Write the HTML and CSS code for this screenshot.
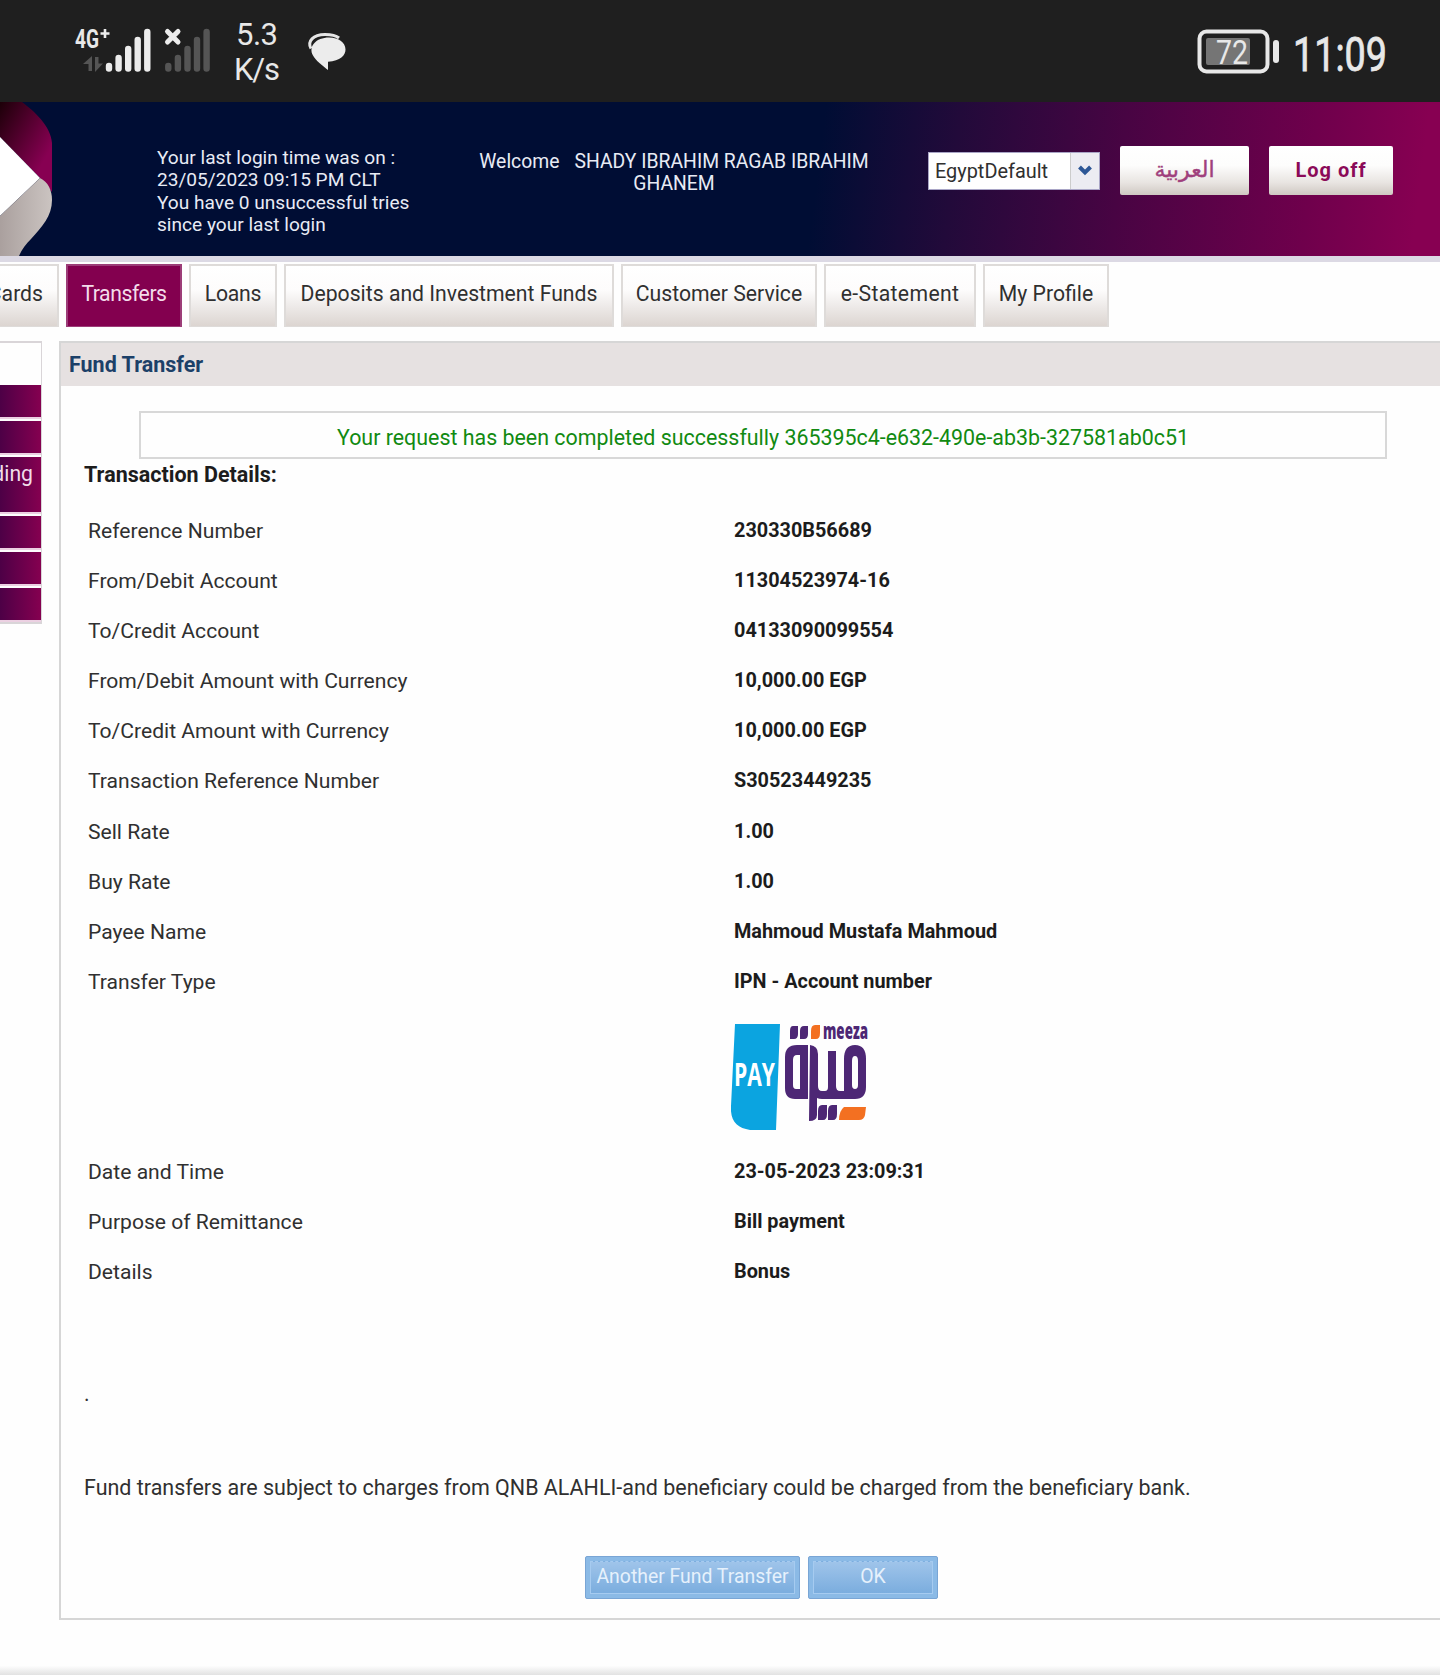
FILE: index.html
```html
<!DOCTYPE html>
<html lang="en">
<head>
<meta charset="utf-8">
<title>Fund Transfer</title>
<link rel="stylesheet" href="styles.css">
</head>
<body>
<div class="status">
  <svg class="status-icons" width="360" height="102" viewBox="0 0 360 102">
    <text x="75" y="48" class="net" textLength="24" lengthAdjust="spacingAndGlyphs">4G</text>
    <path d="M105 29v9M100.500 33.500h9" stroke="#ececec" stroke-width="2.600"/>
    <path d="M92 56v15h-3.500v-7H83zM95 57h3.500v6.500h4.500L95 72z" fill="#555"/>
    <g stroke="#ececec" stroke-width="6.400" stroke-linecap="round">
      <path d="M109 66v2.500M118.600 58v10.500M128.200 49v19.500M137.700 40v28.500M147.300 32v36.500"/>
    </g>
    <g stroke="#555" stroke-width="6.400" stroke-linecap="round">
      <path d="M168.300 66v2.500M177.900 58v10.500M187.500 49v19.500M197 40v28.500M206.600 32v36.500"/>
    </g>
    <path d="M167 31l12 11.500M179 31l-12 11.500" stroke="#1f1f1f" stroke-width="9"/>
    <path d="M167.500 31.500l10.500 10.500M178 31.500l-10.500 10.500" stroke="#ececec" stroke-width="5" stroke-linecap="round"/>
    <text x="236" y="45" class="speed" textLength="42">5.3</text>
    <text x="234" y="80" class="speed" textLength="46">K/s</text>
    <path d="M311 48.500c-4-7 2-14 14-14 7 0 11 1 14 3.500" stroke="#e6e6e6" stroke-width="3" fill="none"/>
    <path d="M329 37.500c10 0 16.500 5 16.500 12 0 6-5 11-17.500 12.300v8.200c-5-4-12-9-15-14.500-5-9 3-18 16-18z" fill="#ececec"/>
  </svg>
  <svg class="status-icons" width="260" height="102" viewBox="0 0 260 102">
    <rect x="19.500" y="31.500" width="68" height="40" rx="7" fill="none" stroke="#e8e8e8" stroke-width="4"/>
    <rect x="26" y="38" width="44" height="27" rx="2" fill="#757575"/>
    <text x="36" y="63.500" class="level" textLength="32" lengthAdjust="spacingAndGlyphs">72</text>
    <path d="M96 43v17" stroke="#e8e8e8" stroke-width="6" stroke-linecap="round"/>
    <text x="113" y="70.500" class="clock" textLength="94" lengthAdjust="spacingAndGlyphs">11:09</text>
  </svg>
</div>

<header class="header">
  <svg class="brand" width="157" height="154" viewBox="0 0 157 154">
    <defs>
      <linearGradient id="ruby" x1="0" y1="0" x2="1" y2="1">
        <stop offset="0" stop-color="#1c0008"/><stop offset=".75" stop-color="#870052"/>
      </linearGradient>
      <linearGradient id="stone" x1="0" y1="0" x2="1" y2="0">
        <stop offset="0" stop-color="#aaa09e"/><stop offset="1" stop-color="#cbc4c1"/>
      </linearGradient>
    </defs>
    <path d="M0 0h22c12 9 29 24 30 41v49L40 76 0 35z" fill="url(#ruby)"/>
    <path d="M0 35l40 41L0 114z" fill="#fff"/>
    <path d="M0 114l40-38c8 4 12 12 12 22 0 16-10 27-21 39-5 5-9 10-12 17H0z" fill="url(#stone)"/>
  </svg>
  <div class="last-login">Your last login time was on :<br>23/05/2023 09:15 PM CLT<br>You have 0 unsuccessful tries<br>since your last login</div>
  <div class="customer"><span class="welcome">Welcome</span>SHADY IBRAHIM RAGAB IBRAHIM<br>GHANEM</div>
  <div class="select"><span class="select-value">EgyptDefault</span><span class="select-arrow"><svg width="16" height="12" viewBox="0 0 16 12"><path d="M2.500 2l5.500 5.500L13.500 2" fill="none" stroke="#2d5796" stroke-width="4"/></svg></span></div>
  <div class="head-btn arabic" lang="ar">العربية</div>
  <div class="head-btn logoff">Log off</div>
</header>

<nav class="tabs">
  <div class="tab cards"><span>Cards</span></div>
  <div class="tab active transfers">Transfers</div>
  <div class="tab loans">Loans</div>
  <div class="tab deposits">Deposits and Investment Funds</div>
  <div class="tab service">Customer Service</div>
  <div class="tab statement">e-Statement</div>
  <div class="tab profile">My Profile</div>
</nav>

<div class="columns">
  <aside class="side">
    <div class="side-item"></div>
    <div class="side-item"></div>
    <div class="side-item tall"><span>ding</span></div>
    <div class="side-item"></div>
    <div class="side-item"></div>
    <div class="side-item"></div>
  </aside>
  <main class="panel">
    <h1 class="panel-title">Fund Transfer</h1>
    <div class="notice">Your request has been completed successfully 365395c4-e632-490e-ab3b-327581ab0c51</div>
    <h2 class="subtitle">Transaction Details:</h2>
    <dl class="details">
      <dt>Reference Number</dt><dd>230330B56689</dd>
      <dt>From/Debit Account</dt><dd>11304523974-16</dd>
      <dt>To/Credit Account</dt><dd>04133090099554</dd>
      <dt>From/Debit Amount with Currency</dt><dd>10,000.00 EGP</dd>
      <dt>To/Credit Amount with Currency</dt><dd>10,000.00 EGP</dd>
      <dt>Transaction Reference Number</dt><dd>S30523449235</dd>
      <dt>Sell Rate</dt><dd>1.00</dd>
      <dt>Buy Rate</dt><dd>1.00</dd>
      <dt>Payee Name</dt><dd>Mahmoud Mustafa Mahmoud</dd>
      <dt>Transfer Type</dt><dd>IPN - Account number</dd>
    </dl>
    <svg class="meeza" width="140" height="110" viewBox="0 0 140 110">
      <path d="M4 1h45l-4 106H19C6 105-1 98 0 83z" fill="#0ba4e0"/>
      <text x="3" y="63" class="pay" textLength="41" lengthAdjust="spacingAndGlyphs">PAY</text>
      <g fill="#4d2775">
        <path d="M62 3h5v8q0 5-4 5h-4V8q0-5 3-5zM73 3h4v8q0 5-4 5h-4V8q0-5 4-5z"/>
        <path d="M91 82h5v9q0 6-4 6h-5v-9q0-6 4-6zM101 82h5v9q0 6-4 6h-5v-9q0-6 4-6z"/>
      </g>
      <path d="M84 2h5v8q0 6-4 6h-5V8q0-6 4-6z" fill="#f37021"/>
      <text x="92" y="16" class="meeza-name" textLength="45" lengthAdjust="spacingAndGlyphs">meeza</text>
      <g fill="#4d2775" fill-rule="evenodd">
        <path d="M66 22h11v54H64q-10 0-10-11V34q0-12 12-12zM66 32q-4 0-4 5v25q0 4 3 4h4V32z"/>
        <path d="M79 22q8 1 8 9v32q0 5 4 5h3q3 0 3-4V28h8v35q0 5 4 5h4V36q0-14 11-14t11 14v28q0 12-11 12H91q-3 0-5-1v17q0 6-8 6zM121 38v24q0 4 3 4t3-4V38q0-5-3-5t-3 5z"/>
      </g>
      <path d="M113 84h22l-1 8q-1 5-6 5h-20q0-9 5-13z" fill="#f37021"/>
    </svg>
    <dl class="details">
      <dt>Date and Time</dt><dd>23-05-2023 23:09:31</dd>
      <dt>Purpose of Remittance</dt><dd>Bill payment</dd>
      <dt>Details</dt><dd>Bonus</dd>
    </dl>
    <p class="dot">.</p>
    <p class="terms">Fund transfers are subject to charges from QNB ALAHLI-and beneficiary could be charged from the beneficiary bank.</p>
    <div class="actions">
      <div class="action wide"><span>Another Fund Transfer</span></div>
      <div class="action"><span>OK</span></div>
    </div>
  </main>
</div>
<div class="bottom-edge"></div>
</body>
</html>
```
FILE: styles.css
```css
* { box-sizing: border-box; }
body {
  margin: 0;
  width: 1440px;
  height: 1675px;
  overflow: hidden;
  display: flex;
  flex-direction: column;
  background: #fefefe;
  color: #303030;
  font: 21.2px/26px Roboto, "Liberation Sans", sans-serif;
  white-space: nowrap;
}
h1, h2, p, dl, dd { margin: 0; }

.status {
  flex: none;
  height: 102px;
  background: #1f1f1f;
  display: flex;
  justify-content: space-between;
}
.status-icons { display: block; fill: #e8e8e8; }
.net { font-size: 26px; font-weight: 700; }
.speed { font-size: 31px; }
.level { font-size: 34px; }
.clock { font-size: 47.5px; stroke: #e8e8e8; stroke-width: .8px; }

.header {
  flex: none;
  height: 160px;
  border-bottom: 6px solid #dcd9e4;
  background: linear-gradient(97deg, #000d34 0, #000d34 820px, #220a3a 955px, #480443 1120px, #6f004c 1310px, #870052 1420px);
  color: #e8ebf5;
  font-size: 19.35px;
  line-height: 22.4px;
  display: flex;
  align-items: flex-start;
}
.brand { display: block; flex: none; }
.last-login { width: 308px; padding-top: 45px; font-size: 19.1px; }
.welcome { margin-right: 15px; }
.customer { width: 418px; padding-top: 49px; text-align: center; }
.select {
  margin: 50px 20px 0 45px;
  width: 172px;
  height: 38px;
  background: #fff;
  border: 1px solid #a9a5c6;
  color: #303030;
  display: flex;
  align-items: center;
}
.select-value { width: 141px; padding: 2px 0 0 6px; font-size: 19.9px; }
.select-arrow {
  flex: 1;
  height: 36px;
  background: #ececf2;
  border-left: 1px solid #ccc;
  display: flex;
  align-items: center;
  justify-content: center;
}
.head-btn {
  margin-top: 44px;
  height: 49px;
  border-radius: 2px;
  background: linear-gradient(#fff 0, #fdfdfc 40%, #e8e4e1 75%, #cfc8c2);
  color: #8b0a58;
  display: flex;
  align-items: center;
  justify-content: center;
}
.arabic { width: 129px; margin-right: 20px; padding-bottom: 3px; font: 22px "DejaVu Sans", sans-serif; color: #a0407c; -webkit-text-stroke: .4px #a0407c; }
.logoff { width: 124px; font-size: 20px; font-weight: 700; letter-spacing: 1px; }

.tabs {
  flex: none;
  height: 79px;
  padding-top: 2px;
  display: flex;
  align-items: flex-start;
  gap: 7px;
}
.tab {
  height: 63px;
  padding-bottom: 5px;
  border: 2px solid #dedbd9;
  border-bottom-width: 1px;
  background: linear-gradient(#fff 0, #fdfcfc 40%, #ebe7e5 72%, #dcd5d1);
  display: flex;
  align-items: center;
  justify-content: center;
}
.cards { width: 59px; border-left: 0; justify-content: flex-end; padding-right: 14px; overflow: hidden; }
.active { background: #83004f; border-color: #9c3d78; color: #f3dcea; }
.transfers { width: 116px; letter-spacing: -.45px; }
.loans { width: 88px; letter-spacing: -.2px; }
.deposits { width: 330px; }
.service { width: 196px; }
.statement { width: 152px; letter-spacing: .35px; }
.profile { width: 126px; }

.columns { display: flex; align-items: flex-start; gap: 17px; }
.side {
  width: 42px;
  height: 283px;
  padding-top: 42px;
  border: solid #d9d5d8;
  border-width: 2px 1px 2px 0;
  display: flex;
  flex-direction: column;
  gap: 4px;
}
.side-item {
  height: 32px;
  background: linear-gradient(90deg, #4d0046, #850050);
  box-shadow: 0 2px #ecd0e2;
  color: #f0dce9;
  display: flex;
  justify-content: flex-end;
  overflow: visible;
}
.tall { height: 55px; padding: 4px 8px 0 0; }
.panel {
  width: 1381px;
  height: 1279px;
  border: solid #d6d6d6;
  border-width: 2px 0 2px 2px;
}
.panel-title {
  height: 43px;
  padding: 8px 0 0 8px;
  background: #e6e1e1;
  color: #1c4068;
  font-size: 21.5px;
  line-height: 28px;
}
.notice {
  margin: 25px 0 0 78px;
  width: 1248px;
  height: 48px;
  border: 2px solid #d8d8d8;
  color: #118a11;
  font-size: 21.4px;
  line-height: 49px;
  text-align: center;
}
.subtitle { padding: 2px 0 0 23px; font-size: 21.5px; line-height: 28px; color: #1c1c1c; }
.details {
  padding-left: 27px;
  display: grid;
  grid-template-columns: 646px 1fr;
  grid-auto-rows: 50.15px;
  align-items: center;
}
.subtitle + .details { margin-top: 16.6px; }
dt { font-size: 21.1px; }
dd { font-size: 19.85px; font-weight: 700; color: #1c1c1c; }
.meeza { display: block; margin: 16px 0 13.500px 670px; height: 110px; }
.pay { font: 700 32px "Open Sans", sans-serif; fill: #fff; }
.meeza-name { font: 800 23px "Open Sans", sans-serif; fill: #4d2775; }
.dot { padding: 84px 0 0 23px; }
.terms { padding: 68px 0 0 23px; font-size: 21.48px; }
.actions { margin: 55px 0 0 524px; display: flex; gap: 8px; }
.action {
  width: 130px;
  height: 43px;
  padding: 4px;
  border: 1px solid #79a5d5;
  border-radius: 2px;
  background: #8bbae6;
  color: #e6f1fc;
  font-size: 19.4px;
}
.wide { width: 215px; }
.action span {
  display: flex;
  align-items: center;
  justify-content: center;
  height: 33px;
  border: 1px solid #a6cbf0;
  border-top-style: dashed;
  background: linear-gradient(#9fc4ea, #7badde);
}
.bottom-edge { height: 9px; margin-top: auto; background: linear-gradient(#fdfdfd, #e2e2e2); }
```
